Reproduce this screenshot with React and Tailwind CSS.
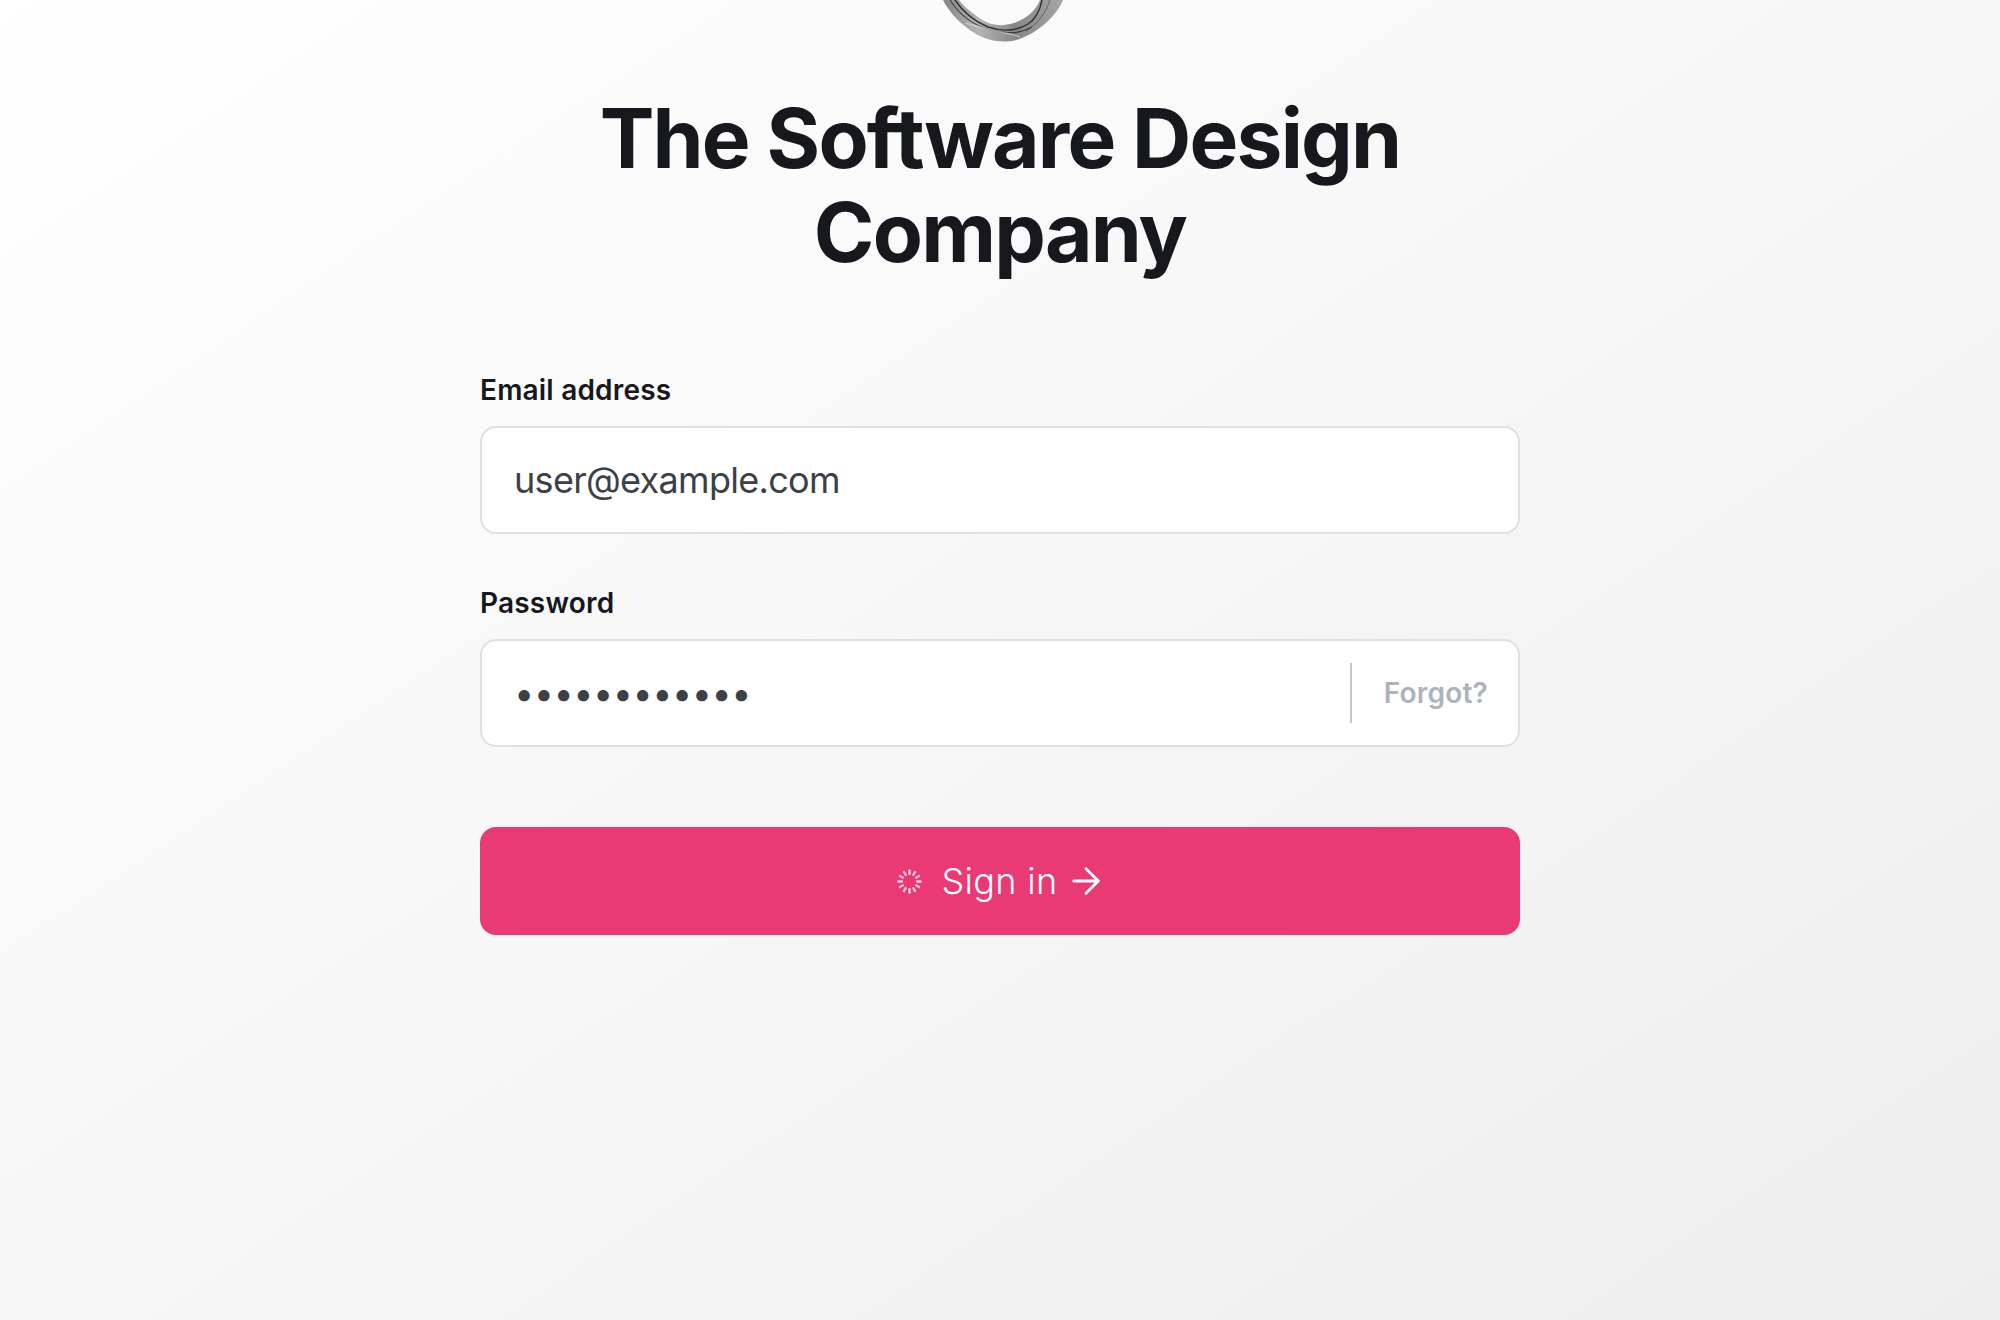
import { ArrowRight } from "lucide-react";

const ticks = Array.from({ length: 12 }, (_, i) => i);

function Spinner() {
  return (
    <svg width="25" height="25" viewBox="0 0 24 24" className="shrink-0">
      {ticks.map((i) => (
        <line
          key={i}
          x1="12"
          y1="0.5"
          x2="12"
          y2="5.5"
          stroke="white"
          strokeWidth="2"
          opacity={i % 3 === 0 ? 1 : 0.75}
          transform={`rotate(${i * 30} 12 12)`}
        />
      ))}
    </svg>
  );
}

function Logo() {
  return (
    <svg width="140" height="42" viewBox="0 0 140 42" className="block ml-[4px]">
      <defs>
        <linearGradient id="lg" x1="0" y1="0" x2="1" y2="0">
          <stop offset="0" stopColor="#858585" />
          <stop offset="0.3" stopColor="#b4b4b4" />
          <stop offset="0.6" stopColor="#868686" />
          <stop offset="1" stopColor="#a6a6a6" />
        </linearGradient>
      </defs>
      <path
        d="M11 0 C17 12 29 25 44 34 C58 42 76 44 90 38 C108 31 125 15 131 0 L108 0 C103 12 92 21 78 24 C66 27 55 24 46 17 C38 11 31 6 27 0 Z"
        fill="url(#lg)"
      />
      <path d="M23 0 C31 12 42 21 56 27 C70 32 85 31 96 24 C104 19 108 10 110 0" fill="none" stroke="#262626" strokeWidth="1.4" opacity="0.9" />
      <path d="M18 0 C28 16 44 27 60 30 C74 33 86 35 100 27" fill="none" stroke="#2a2a2a" strokeWidth="1.1" opacity="0.8" />
      <path d="M34 23 C50 29 70 31 88 37" fill="none" stroke="#e6e6e6" strokeWidth="1.4" opacity="0.5" />
      <path d="M118 0 C114 12 106 24 94 31" fill="none" stroke="#4a4a4a" strokeWidth="1" opacity="0.65" />
    </svg>
  );
}

export default function App() {
  return (
    <div className="h-[1320px] overflow-hidden bg-linear-to-br from-white to-[#eeeeee] font-['Inter',sans-serif] flex flex-col items-center">
      <Logo />
      <h1 className="mt-[50px] w-[1040px] text-center text-[82px] leading-[94px] font-bold tracking-[-0.022em] text-[#16181d]">
        The Software Design
        <br />
        Company
      </h1>
      <form className="mt-[92px] w-[1040px] flex flex-col">
        <label className="text-[28px] leading-[36px] font-semibold tracking-[0.2px] text-[#16181d]">Email address</label>
        <input
          readOnly
          value="user@example.com"
          className="mt-[18px] h-[108px] rounded-[16px] border-2 border-[#e0e0e0] bg-white px-[32px] text-[36px] font-normal tracking-[-0.7px] text-[#3c4148] outline-none"
        />
        <label className="mt-[51px] text-[28px] leading-[36px] font-semibold tracking-[0.2px] text-[#16181d]">Password</label>
        <div className="mt-[18px] h-[108px] rounded-[16px] border-2 border-[#e0e0e0] bg-white flex items-center pl-[32px] pr-[30px]">
          <input
            readOnly
            type="password"
            value="password1234"
            className="flex-1 min-w-0 text-[36px] tracking-[-0.5px] text-[#3c4148] outline-none bg-transparent"
          />
          <div className="w-[2px] h-[60px] bg-[#c8c8c8]" />
          <span className="ml-[32px] text-[28px] font-semibold tracking-[0.2px] text-[#adb3bd]">Forgot?</span>
        </div>
        <button
          type="button"
          className="mt-[80px] h-[108px] rounded-[16px] bg-[#ea3a76] text-white flex items-center justify-center text-[36px] font-light tracking-[0.3px]"
        >
          <Spinner />
          <span className="ml-[20px]">Sign in</span>
          <ArrowRight size={42} strokeWidth={1.6} className="ml-[8px] -mr-[4px]" />
        </button>
      </form>
    </div>
  );
}
